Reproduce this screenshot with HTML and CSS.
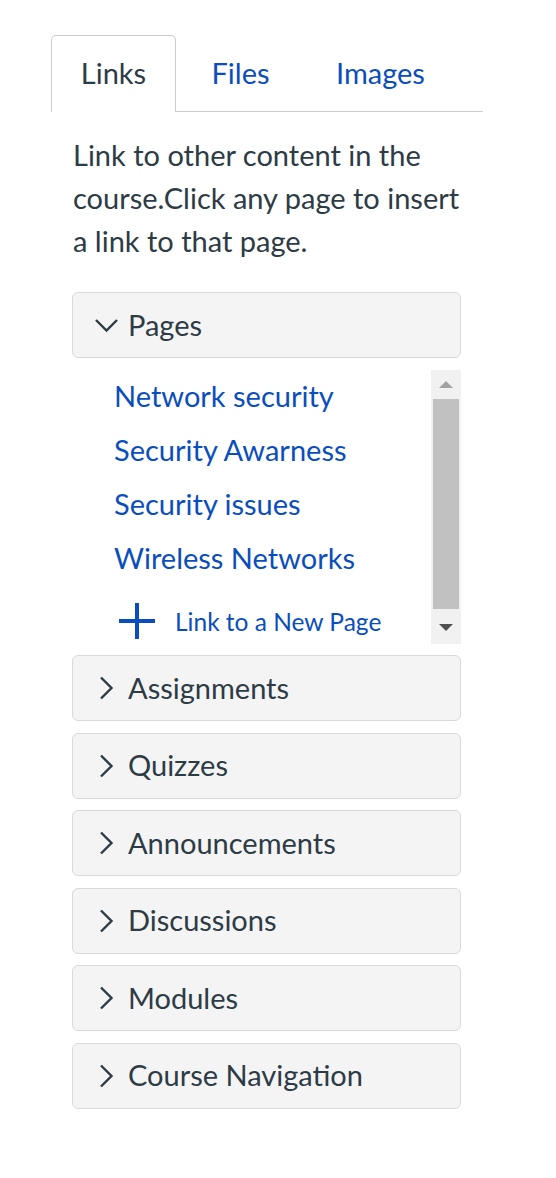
FILE: index.html
```html
<!DOCTYPE html>
<html lang="en">
<head>
<meta charset="utf-8">
<title>Links</title>
<link rel="stylesheet" href="styles.css">
</head>
<body>
<div class="panel">
  <div class="tabs">
    <div class="tab active">Links</div>
    <div class="tab">Files</div>
    <div class="tab">Images</div>
  </div>
  <div class="content">
    <p class="desc">Link to other content in the course.Click any page to insert a link to that page.</p>
    <div class="acc open">
      <svg class="chev" viewBox="0 0 24 24" width="24" height="24"><path d="M2 7 L12.5 17.5 L23 7" fill="none" stroke="#2d3b45" stroke-width="2.4"/></svg>
      <span class="label">Pages</span>
    </div>
    <div class="scrollbox">
      <div class="list">
        <div class="item">Network security</div>
        <div class="item">Security Awarness</div>
        <div class="item">Security issues</div>
        <div class="item">Wireless Networks</div>
        <div class="newpage">
          <svg class="plus" viewBox="0 0 36 36" width="36" height="36"><path d="M18 0 V36 M0 18 H36" stroke="#0a4ebd" stroke-width="4"/></svg>
          <span>Link to a New Page</span>
        </div>
      </div>
      <div class="scrollbar">
        <div class="arrow up"></div>
        <div class="thumb"></div>
        <div class="arrow down"></div>
      </div>
    </div>
    <div class="acc">
      <svg class="chev" viewBox="0 0 24 24" width="24" height="24"><path d="M7 1.5 L17.5 12 L7 22.5" fill="none" stroke="#2d3b45" stroke-width="2.4"/></svg>
      <span class="label">Assignments</span>
    </div>
    <div class="acc">
      <svg class="chev" viewBox="0 0 24 24" width="24" height="24"><path d="M7 1.5 L17.5 12 L7 22.5" fill="none" stroke="#2d3b45" stroke-width="2.4"/></svg>
      <span class="label">Quizzes</span>
    </div>
    <div class="acc">
      <svg class="chev" viewBox="0 0 24 24" width="24" height="24"><path d="M7 1.5 L17.5 12 L7 22.5" fill="none" stroke="#2d3b45" stroke-width="2.4"/></svg>
      <span class="label">Announcements</span>
    </div>
    <div class="acc">
      <svg class="chev" viewBox="0 0 24 24" width="24" height="24"><path d="M7 1.5 L17.5 12 L7 22.5" fill="none" stroke="#2d3b45" stroke-width="2.4"/></svg>
      <span class="label">Discussions</span>
    </div>
    <div class="acc">
      <svg class="chev" viewBox="0 0 24 24" width="24" height="24"><path d="M7 1.5 L17.5 12 L7 22.5" fill="none" stroke="#2d3b45" stroke-width="2.4"/></svg>
      <span class="label">Modules</span>
    </div>
    <div class="acc">
      <svg class="chev" viewBox="0 0 24 24" width="24" height="24"><path d="M7 1.5 L17.5 12 L7 22.5" fill="none" stroke="#2d3b45" stroke-width="2.4"/></svg>
      <span class="label">Course Navigation</span>
    </div>
  </div>
</div>
</body>
</html>
```

FILE: styles.css
```css
html, body {
  margin: 0;
  padding: 0;
  background: #ffffff;
}
body {
  font-family: Lato, "Noto Sans", sans-serif;
  color: #2d3b45;
}
.panel {
  padding: 35px 0 0 51px;
  width: 432px;
}
.tabs {
  display: flex;
  border-bottom: 1px solid #c7cdd1;
  height: 76px;
}
.tab {
  box-sizing: border-box;
  height: 76px;
  display: flex;
  align-items: center;
  justify-content: center;
  font-size: 29px;
  color: #0a4ebd;
  border: 1px solid transparent;
  border-bottom: none;
  padding-bottom: 3px;
}
.tab.active {
  width: 125px;
  color: #2d3b45;
  border-color: #c7cdd1;
  border-radius: 5px 5px 0 0;
  background: #fff;
  height: 77px;
  padding-bottom: 4px;
}
.tab:nth-child(2) {
  width: 129px;
}
.tab:nth-child(3) {
  width: 151px;
}
.content {
  padding: 0 22px 0 21px;
}
.desc {
  margin: 21px 0 30px 1px;
  font-size: 29px;
  line-height: 43px;
}
.acc {
  box-sizing: border-box;
  height: 66px;
  background: #f4f4f4;
  border: 1px solid #d7dadd;
  border-radius: 6px;
  display: flex;
  align-items: center;
  padding-left: 21px;
  font-size: 29px;
  margin-bottom: 11.5px;
}
.label {
  margin-bottom: 2px;
}
.acc.open {
  margin-bottom: 12px;
}
.chev {
  margin-right: 10px;
  flex: none;
}
.scrollbox {
  display: flex;
  height: 274px;
  overflow: hidden;
  margin-bottom: 11px;
}
.list {
  flex: 1;
  padding-left: 42px;
}
.item {
  box-sizing: border-box;
  height: 54px;
  display: flex;
  align-items: center;
  font-size: 29px;
  color: #0a4ebd;
  padding-bottom: 3px;
}
.newpage {
  height: 70px;
  display: flex;
  align-items: center;
  color: #0a4ebd;
  font-size: 24.5px;
  padding-left: 5px;
}
.plus {
  margin-right: 20px;
  flex: none;
}
.scrollbar {
  width: 30px;
  flex: none;
  background: #f1f1f1;
  display: flex;
  flex-direction: column;
  align-items: center;
}
.arrow {
  width: 0;
  height: 0;
  border-left: 7px solid transparent;
  border-right: 7px solid transparent;
}
.arrow.up {
  border-bottom: 7px solid #a3a3a3;
  margin-top: 11px;
}
.thumb {
  width: 26px;
  height: 210px;
  background: #c1c1c1;
  margin-top: 11px;
}
.arrow.down {
  border-top: 7px solid #505050;
  margin-top: 15px;
}
```
